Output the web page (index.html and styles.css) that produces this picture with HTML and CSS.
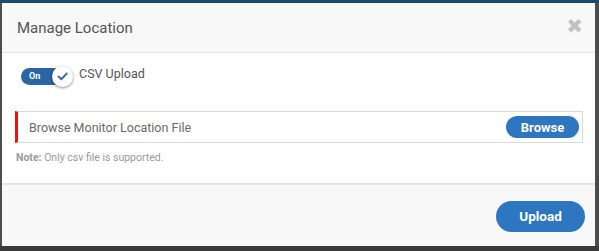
FILE: index.html
```html
<!DOCTYPE html>
<html>
<head>
<meta charset="utf-8">
<link rel="stylesheet" href="styles.css">
</head>
<body>
<div class="modal">
  <div class="modal-header">
    <h1 class="title">Manage Location</h1>
    <span class="close">&#x2716;</span>
  </div>
  <div class="modal-body">
    <div class="toggle-row">
      <div class="toggle">
        <span class="toggle-label">On</span>
        <span class="knob">
          <svg width="11" height="9" viewBox="0 0 11 9"><path d="M1.5 4.6 L4.3 7.2 L9.6 1.6" fill="none" stroke="#3a6d98" stroke-width="2" stroke-linecap="round" stroke-linejoin="round"/></svg>
        </span>
      </div>
      <span class="toggle-text">CSV Upload</span>
    </div>
    <div class="file-input">
      <span class="file-placeholder">Browse Monitor Location File</span>
      <button class="btn btn-browse">Browse</button>
    </div>
    <p class="note"><b>Note:</b> Only csv file is supported.</p>
  </div>
  <div class="modal-footer">
    <button class="btn btn-upload">Upload</button>
  </div>
</div>
</body>
</html>
```
FILE: styles.css
```css
html, body {
  margin: 0;
  padding: 0;
}
body {
  width: 599px;
  height: 251px;
  overflow: hidden;
  background: linear-gradient(#1c4a69 0, #1c4a69 3px, #4d4d4d 3px, #4d4d4d 246px, #3a3a3a 246px);
  font-family: Roboto, "Liberation Sans", sans-serif;
  padding: 3px 4px 5px 2px;
  box-sizing: border-box;
}
.modal {
  width: 593px;
  height: 243px;
  background: #fff;
  display: flex;
  flex-direction: column;
}
.modal-header {
  height: 50px;
  background: #f8f8f8;
  border-bottom: 1px solid #e3e3e3;
  display: flex;
  align-items: center;
  justify-content: space-between;
  padding: 0 12px 0 15px;
  box-sizing: border-box;
  flex-shrink: 0;
}
.title {
  margin: 0;
  font-size: 15px;
  font-weight: 400;
  color: #555;
  padding-top: 1px;
}
.close {
  color: #c2c2c2;
  font-size: 20px;
  line-height: 20px;
  font-family: "DejaVu Sans", sans-serif;
  font-weight: bold;
  margin-top: -3px;
}
.modal-body {
  flex: 1;
  padding: 12px 12px 0 13px;
  box-sizing: border-box;
}
.toggle-row {
  display: flex;
  align-items: center;
  padding-left: 6px;
  height: 22px;
}
.toggle {
  position: relative;
  width: 52px;
  height: 17px;
  display: flex;
  align-items: center;
}
.toggle::before {
  content: "";
  position: absolute;
  left: 0;
  top: 0;
  width: 42px;
  height: 17px;
  border-radius: 9px;
  background: #2a66a3;
}
.toggle-label {
  position: relative;
  color: #fff;
  font-size: 9px;
  font-weight: bold;
  padding-left: 8px;
}
.knob {
  position: absolute;
  left: 31px;
  top: -2px;
  width: 21px;
  height: 21px;
  border-radius: 50%;
  background: #fff;
  box-shadow: 0 1px 3px rgba(0,0,0,0.45);
  display: flex;
  align-items: center;
  justify-content: center;
}
.toggle-text {
  margin-left: 6px;
  font-size: 12.5px;
  color: #555;
  margin-top: -6px;
}
.file-input {
  margin-top: 24px;
  height: 32px;
  border: 1px solid #d9d9d9;
  border-left: 3px solid #ee1111;
  box-sizing: border-box;
  display: flex;
  align-items: center;
  justify-content: space-between;
  padding: 0 3px 0 11px;
}
.file-placeholder {
  font-size: 12.5px;
  color: #6a6a6a;
}
.btn {
  background: #2e77c0;
  color: #fff;
  border: none;
  font-family: Roboto, "Liberation Sans", sans-serif;
  font-weight: bold;
  border-radius: 12px;
  cursor: pointer;
}
.btn-browse {
  width: 73px;
  height: 22px;
  font-size: 13px;
  padding: 0;
}
.note {
  margin: 8px 0 0 1px;
  font-size: 10.5px;
  color: #999;
}
.note b {
  font-weight: bold;
}
.modal-footer {
  height: 63px;
  background: #f8f8f8;
  border-top: 2px solid #e6e6e6;
  box-sizing: border-box;
  display: flex;
  align-items: center;
  justify-content: flex-end;
  padding: 0 10px 0 0;
  flex-shrink: 0;
}
.btn-upload {
  width: 89px;
  height: 31px;
  border-radius: 16px;
  font-size: 13.5px;
  margin-top: 1px;
}
```
